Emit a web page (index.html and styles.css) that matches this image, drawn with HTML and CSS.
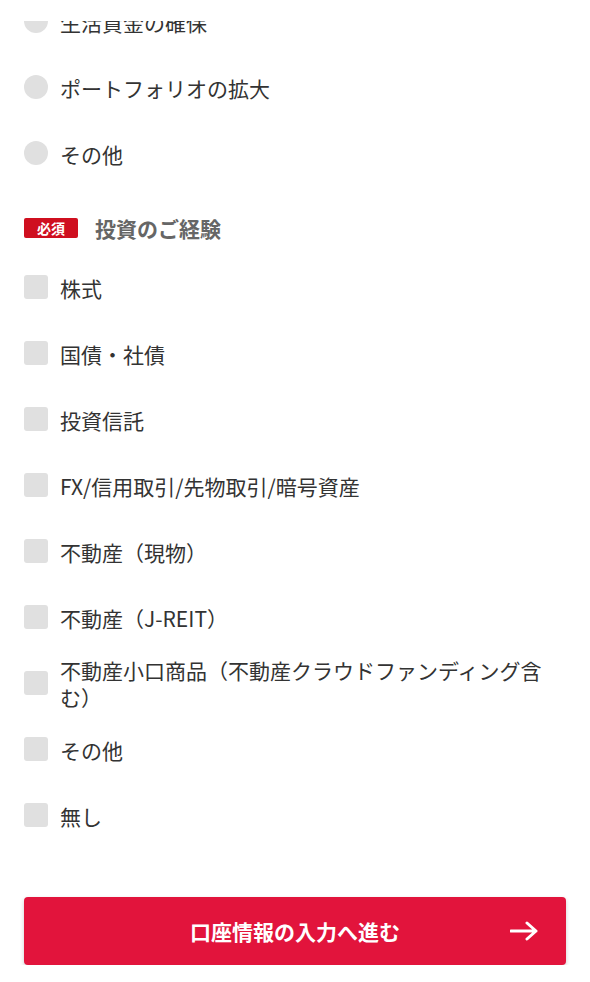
FILE: index.html
```html
<!DOCTYPE html>
<html lang="ja">

<head>
    <meta charset="UTF-8" />
    <meta name="viewport" content="width=device-width, initial-scale=1.0" />
    <title>投資のご経験</title>
    <link rel="stylesheet" href="styles.css">
</head>

<body>
    <div class="top-cover"></div>

    <main class="form">
        <ul class="option-list radio-list">
            <li class="option"><span class="radio"></span><span class="label">生活資金の確保</span></li>
            <li class="option"><span class="radio"></span><span class="label">ポートフォリオの拡大</span></li>
            <li class="option"><span class="radio"></span><span class="label">その他</span></li>
        </ul>

        <section class="question">
            <h2 class="question-title">
                <span class="badge">必須</span>
                <span>投資のご経験</span>
            </h2>

            <ul class="option-list check-list">
                <li class="option"><span class="checkbox"></span><span class="label">株式</span></li>
                <li class="option"><span class="checkbox"></span><span class="label">国債・社債</span></li>
                <li class="option"><span class="checkbox"></span><span class="label">投資信託</span></li>
                <li class="option"><span class="checkbox"></span><span class="label">FX/信用取引/先物取引/暗号資産</span></li>
                <li class="option"><span class="checkbox"></span><span class="label">不動産（現物）</span></li>
                <li class="option"><span class="checkbox"></span><span class="label">不動産（J-REIT）</span></li>
                <li class="option"><span class="checkbox"></span><span class="label">不動産小口商品（不動産クラウドファンディング含む）</span></li>
                <li class="option"><span class="checkbox"></span><span class="label">その他</span></li>
                <li class="option"><span class="checkbox"></span><span class="label">無し</span></li>
            </ul>
        </section>

        <button class="next-button" type="button">
            <span class="next-text">口座情報の入力へ進む</span>
            <svg class="next-arrow" width="28" height="20" viewBox="0 0 28 20" fill="none">
                <path d="M1 10H26M17 2L26 10L17 18" stroke="#fff" stroke-width="3" stroke-linecap="round" stroke-linejoin="round" />
            </svg>
        </button>
    </main>
</body>

</html>
```

FILE: styles.css
```css
body {
    margin: 0;
    padding: 0;
    font-family: 'Noto Sans CJK JP', 'Noto Sans', sans-serif;
    background: #ffffff;
    color: #333333;
    overflow: hidden;
}

.top-cover {
    position: fixed;
    top: 0;
    left: 0;
    right: 0;
    height: 21px;
    background: #ffffff;
    z-index: 2;
}

.form {
    padding: 0 24px;
}

.option-list {
    list-style: none;
    margin: 0;
    padding: 0;
}

.radio-list {
    margin-top: -12px;
}

.option {
    height: 66px;
    display: flex;
    align-items: center;
    gap: 12px;
}

.radio,
.checkbox {
    flex: 0 0 24px;
    width: 24px;
    height: 24px;
    background: #e0e0e0;
}

.radio {
    border-radius: 50%;
}

.checkbox {
    border-radius: 3px;
}

.label {
    font-size: 21px;
    line-height: 27px;
    padding-top: 2px;
}

.question {
    margin-top: 27px;
}

.question-title {
    margin: 0;
    display: flex;
    align-items: center;
    gap: 17px;
    height: 30px;
    font-size: 21px;
    font-weight: bold;
    color: #666666;
}

.badge {
    width: 54px;
    height: 20px;
    border-radius: 2px;
    background: #cf0f1f;
    color: #ffffff;
    font-size: 14px;
    line-height: 20px;
    text-align: center;
}

.check-list {
    margin-top: 11px;
}

.next-button {
    margin-top: 49px;
    width: 100%;
    height: 68px;
    border: none;
    border-radius: 4px;
    background: #e2143c;
    box-shadow: 0 2px 4px rgba(0, 0, 0, 0.2);
    color: #ffffff;
    font-family: inherit;
    font-size: 21px;
    font-weight: bold;
    display: grid;
    grid-template-columns: 1fr auto 1fr;
    align-items: center;
    padding: 0 28px;
}

.next-text {
    grid-column: 2;
}

.next-arrow {
    grid-column: 3;
    justify-self: end;
}
```
